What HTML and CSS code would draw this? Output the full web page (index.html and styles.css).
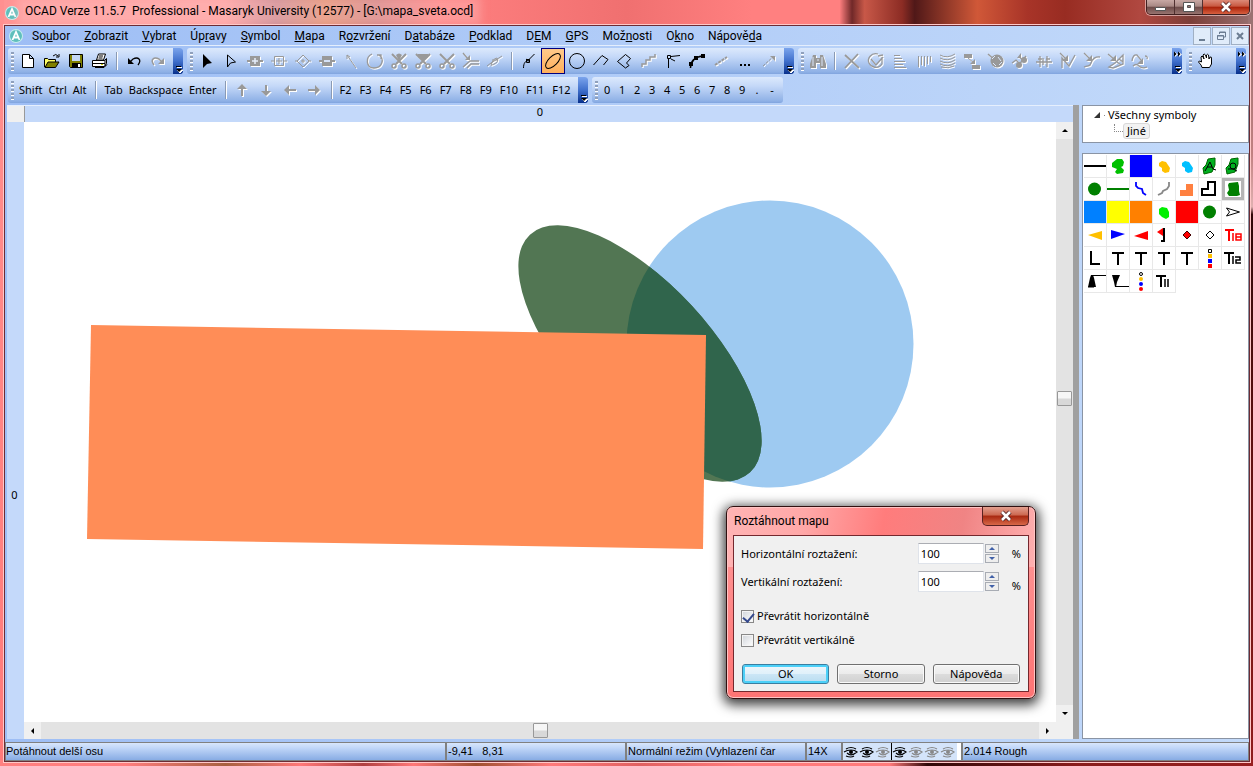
FILE: index.html
```
<!DOCTYPE html>
<html lang="cs">
<head>
<meta charset="utf-8">
<title>OCAD</title>
<link rel="stylesheet" href="styles.css">
</head>
<body>
<div class="window">
  <header class="titlebar">
    <svg class="logo" viewBox="0 0 14 14"><use href="#logo"/></svg>
    <h1 class="title">OCAD Verze 11.5.7&nbsp; Professional - Masaryk University (12577) - [G:\mapa_sveta.ocd]</h1>
    <div class="winbtns">
      <button class="wb" aria-label="Minimalizovat"><svg viewBox="0 0 14 12"><path d="M1.500 6.500h10v3h-10z" fill="#fff" stroke="#555"/></svg></button>
      <button class="wb" aria-label="Maximalizovat"><svg viewBox="0 0 14 12"><path d="M1.500 1.500h11v9h-11zM5.500 4.500v2h3v-2z" fill="#fff" fill-rule="evenodd" stroke="#555"/></svg></button>
      <button class="wb close" aria-label="Zavřít"><svg viewBox="0 0 14 12"><use href="#x"/></svg></button>
    </div>
  </header>
  <div class="frame">
    <nav class="menubar">
      <svg class="logo" viewBox="0 0 14 14"><use href="#logo"/></svg>
      <div class="menus">
      <a href="#">So<u>u</u>bor</a><a href="#"><u>Z</u>obrazit</a><a href="#"><u>V</u>ybrat</a><a href="#">Úp<u>r</u>avy</a><a href="#"><u>S</u>ymbol</a><a href="#"><u>M</u>apa</a><a href="#">R<u>o</u>zvržení</a><a href="#">D<u>a</u>tabáze</a><a href="#"><u>P</u>odklad</a><a href="#">D<u>E</u>M</a><a href="#"><u>G</u>PS</a><a href="#">Mož<u>n</u>osti</a><a href="#">O<u>k</u>no</a><a href="#">Nápově<u>d</u>a</a>
      </div>
      <div class="mdi">
        <button aria-label="Minimalizovat mapu"><svg viewBox="0 0 16 16"><path d="M5 11h6v2H5z" fill="#6b7d92"/></svg></button>
        <button aria-label="Obnovit mapu"><svg viewBox="0 0 16 16"><path d="M6.500 6V4h6v5h-2M4.500 7.500h6v4h-6zM4 8h7M6 4.500h7" fill="none" stroke="#6b7d92"/></svg></button>
        <button aria-label="Zavřít mapu"><svg viewBox="0 0 16 16"><path d="M5 5l6 6M11 5l-6 6" stroke="#6b7d92" stroke-width="2"/></svg></button>
      </div>
    </nav>

    <div class="bars">
      <div class="row">
        <div class="bar"><i class="grip"></i>
          <button class="tb" aria-label="Nový"><svg viewBox="0 0 20 20"><path d="M4.500 3.500h7l4 4v9h-11zM11.500 3.500v4h4" fill="#fff" stroke="#000"/></svg></button>
          <button class="tb" aria-label="Otevřít"><svg viewBox="0 0 20 20"><path d="M2.500 16V7.500h3l1 1h7V11" fill="#ffff66" stroke="#000"/><path d="M3 16.500l3-5.500h11l-3.500 5.500z" fill="#808000" stroke="#000"/><path d="M11 5q3-3 5 0M17 3v3h-3" fill="none" stroke="#000"/></svg></button>
          <button class="tb" aria-label="Uložit"><svg viewBox="0 0 20 20"><path d="M3.500 3.500h13v13h-12l-1-1z" fill="#808000" stroke="#000"/><path d="M6 4h8v6H6z" fill="#c3d6f5"/><path d="M6 12h9v4H6z" fill="#000"/><path d="M12 13h2v3h-2z" fill="#fff"/></svg></button>
          <button class="tb" aria-label="Tisk"><svg viewBox="0 0 20 20"><path d="M6.500 9l2-6h7l-2 6z" fill="#fff" stroke="#000"/><path d="M2.500 9.500h12l2-2v5l-2 3h-12z" fill="#fff" stroke="#000"/><path d="M3 12.500h12M5 16.500h9l3-3M9 5h4M8.500 7h4M15 9v6" fill="none" stroke="#000"/><path d="M11 13h2v1h-2z" fill="#cc0"/></svg></button>
          <i class="sep"></i>
          <button class="tb" aria-label="Zpět"><svg viewBox="0 0 20 20"><path d="M4 7v6h6z"/><path d="M6 11l3-3q4-2 6 0t-1 6" fill="none" stroke="#000" stroke-width="1.300"/></svg></button>
          <button class="tb off" aria-label="Znovu"><svg viewBox="0 0 20 20"><path d="M16 7v6h-6z"/><path class="l" d="M14 11l-3-3q-4-2-6 0t1 6" stroke-width="1.500"/></svg></button>
          <button class="more" aria-label="Další"><svg viewBox="0 0 10 26"><use href="#more"/></svg></button>
        </div>
        <div class="bar"><i class="grip"></i>
          <button class="tb" aria-label="Vybrat objekt"><svg viewBox="0 0 20 20"><path d="M6 3v14l4-4 5-1z"/></svg></button>
          <button class="tb" aria-label="Vybrat bod"><svg viewBox="0 0 20 20"><path d="M6.500 4v12l3-4 5-1z" fill="none" stroke="#000"/></svg></button>
          <button class="tb off" aria-label="Bod"><svg viewBox="0 0 20 20"><path d="M5 5h10v10H5zM2 9h3v2H2zM15 9h3v2h-3z"/><path d="M10 7v6M7 10h6" stroke="#e6eefb" stroke-width="1.500"/></svg></button>
          <button class="tb off" aria-label="Přidat bod"><svg viewBox="0 0 20 20"><path class="l" d="M2 10h3M15 10h3M10 7v6M7 10h6M5.500 5.500h9v9h-9z"/></svg></button>
          <button class="tb off" aria-label="Rohový bod"><svg viewBox="0 0 20 20"><path class="l" d="M10 4l6 6-6 6-6-6zM2 10h3M15 10h3M10 8v4M8 10h4"/></svg></button>
          <button class="tb off" aria-label="Odebrat bod"><svg viewBox="0 0 20 20"><path d="M5 5h10v10H5zM2 9h3v2H2zM15 9h3v2h-3z"/><path d="M7 9h6v2H7z" fill="#d5e2f8"/></svg></button>
          <button class="tb off" aria-label="Směr"><svg viewBox="0 0 20 20"><path class="l" d="M15 17L6 4M6 8V4l3 2"/></svg></button>
          <button class="tb off" aria-label="Otočit"><svg viewBox="0 0 20 20"><path class="l" d="M7 3C0 6 1 17 9 17s11-9 5-13M12 4h4v4" stroke-width="1.300"/></svg></button>
          <button class="tb off" aria-label="Vystřihnout"><svg viewBox="0 0 20 20"><use href="#cut"/><path d="M7 4q3-3 6 0l-3 6z"/></svg></button>
          <button class="tb off" aria-label="Vystřihnout linii"><svg viewBox="0 0 20 20"><use href="#cut"/><path d="M5 3h10v3l-5 4-5-4z"/></svg></button>
          <button class="tb off" aria-label="Střih"><svg viewBox="0 0 20 20"><use href="#cut"/></svg></button>
          <button class="tb off" aria-label="Spojit"><svg viewBox="0 0 20 20"><path d="M9 9V4L4 9z"/><path class="l" d="M2 2l5 6M2 16l7-6h9M6 17l4-4h8" stroke-width="1.300"/></svg></button>
          <button class="tb off" aria-label="Tvarovat"><svg viewBox="0 0 20 20"><path class="l" d="M2 15l4-3 11-7M6 15q1-7 6-8 3 4-5 7M7 9h6"/></svg></button>
          <i class="sep"></i>
          <button class="tb" aria-label="Křivka"><svg viewBox="0 0 20 20"><path d="M4.500 17c0-5 2-7 4-7l7-7M7 8l4 3M7.500 8.500h3v3h-3z" fill="none" stroke="#000"/></svg></button>
          <button class="tb active" aria-label="Elipsa"><svg viewBox="0 0 20 20"><ellipse cx="10" cy="10" rx="9.500" ry="4.500" transform="rotate(-45 10 10)" fill="none" stroke="#000"/></svg></button>
          <button class="tb" aria-label="Kružnice"><svg viewBox="0 0 20 20"><circle cx="10" cy="10" r="7.500" fill="none" stroke="#000"/></svg></button>
          <button class="tb" aria-label="Lomená čára"><svg viewBox="0 0 20 20"><path d="M2.500 14l8.500-9.500 6 4-4.500 5.500" fill="none" stroke="#000"/></svg></button>
          <button class="tb" aria-label="Pravoúhlá plocha"><svg viewBox="0 0 20 20"><path d="M2.500 10.500l8-7 5 4-4 4.500 2.500 2.500-3.500 2.500z" fill="none" stroke="#000"/></svg></button>
          <button class="tb off" aria-label="Schodiště"><svg viewBox="0 0 20 20"><path class="l" d="M3 16v-3h4V9h4V6h5V3" stroke-width="1.500"/></svg></button>
          <button class="tb" aria-label="Bod lomu"><svg viewBox="0 0 20 20"><path d="M5.500 17V8M8 5.500l9-1M4.500 4.500h3v3h-3zM8 8l4 2" fill="none" stroke="#000"/></svg></button>
          <button class="tb" aria-label="Volná křivka"><svg viewBox="0 0 20 20"><path d="M3.500 17c0-8 5-11 12-12" fill="none" stroke="#000" stroke-width="1.500"/><path d="M14 3h4v4h-4zM7 5h4v4H7zM2 11h4v4H2z"/></svg></button>
          <button class="tb off" aria-label="Tečky"><svg viewBox="0 0 20 20"><path class="l" d="M4 14L16 6" stroke-width="2" stroke-dasharray="3 1"/></svg></button>
          <button class="tb" aria-label="Více"><svg viewBox="0 0 20 20"><path d="M5 13h2v2H5zM9 13h2v2H9zM13 13h2v2h-2z"/></svg></button>
          <button class="tb off" aria-label="Sledovat"><svg viewBox="0 0 20 20"><path class="l" d="M4 15L15 5" stroke-dasharray="3 1"/><path d="M11 5h5v5z"/></svg></button>
          <button class="more" aria-label="Další"><svg viewBox="0 0 10 26"><use href="#more"/></svg></button>
        </div>
        <div class="bar grow"><i class="grip"></i>
          <button class="tb off" aria-label="Hledat"><svg viewBox="0 0 20 20"><path d="M5 4h3v3h4V4h3l3 9v4h-6v-5H8v5H2v-4z"/><path d="M5 6v9M14 6v9M9 9h2" stroke="#dce7fa"/></svg></button>
          <i class="sep"></i>
          <button class="tb off" aria-label="Smazat"><svg viewBox="0 0 20 20"><path class="l" d="M3 4l14 13M16 3L3 17" stroke-width="1.800"/></svg></button>
          <button class="tb off" aria-label="Otočit objekt"><svg viewBox="0 0 20 20"><path class="l" d="M12 3C5 1 1 8 3 12s9 7 13 1V6M5 8l5 6 7-8M17 4l-5 1" stroke-width="1.300"/></svg></button>
          <button class="tb off" aria-label="Zarovnat"><svg viewBox="0 0 20 20"><path class="l" d="M4 4.500h6M4 7.500h8M4 10.500h11M4 13.500h9M4 16.500h12"/></svg></button>
          <button class="tb off" aria-label="Rozmístit"><svg viewBox="0 0 20 20"><path class="l" d="M4.500 5v11M7.500 5v9M10.500 5v10M13.500 5v8M16.500 5v6"/></svg></button>
          <button class="tb off" aria-label="Vyplnit"><svg viewBox="0 0 20 20"><path class="l" d="M2 4q7 4 15-1M2 7q7 4 15-1M2 10q7 4 15-1M2 13q7 4 15-1M3 16q7 2 13-1"/></svg></button>
          <button class="tb off" aria-label="Kopírovat vlastnosti"><svg viewBox="0 0 20 20"><path d="M2 3h8v4H2zM10 14h8v4h-8zM13 8v5H8z"/><path class="l" d="M6 7l6 5"/></svg></button>
          <button class="tb off" aria-label="Vyříznout"><svg viewBox="0 0 20 20"><circle cx="11" cy="10" r="6.500"/><path class="l" d="M2 3l8 7" stroke-width="1.500"/><path d="M7 12l3 3M12 6l3 4M6 8l3-3M13 14l3-3" stroke="#dce7fa"/></svg></button>
          <button class="tb off" aria-label="Sloučit"><svg viewBox="0 0 20 20"><path class="l" d="M2 12l4-3 5 5M9 6l4 3M7 16l9-11" stroke-width="1.300"/><circle cx="14" cy="9" r="3"/><circle cx="9" cy="14" r="3"/><path d="M11 2v5H7z"/></svg></button>
          <button class="tb off" aria-label="Rozdělit"><svg viewBox="0 0 20 20"><path class="l" d="M2 11h16M6 5v11M9 7v7M13 5v11M4 8h4M12 8h4" stroke-width="1.300"/></svg></button>
          <button class="tb off" aria-label="Upravit lomenou"><svg viewBox="0 0 20 20"><path class="l" d="M4 17V7l7 8 6-11M2 2l7 7" stroke-width="1.300"/><path d="M10 4v6H4z"/></svg></button>
          <button class="tb off" aria-label="Upravit křivku"><svg viewBox="0 0 20 20"><path class="l" d="M2 16c5-2 6 0 7-4s5-7 9-6M2 2l7 7" stroke-width="1.300"/><path d="M10 4v6H4z"/></svg></button>
          <button class="tb off" aria-label="Upravit plochu"><svg viewBox="0 0 20 20"><path class="l" d="M2 3l7 6M3 16l4 1 10-4V4l-8 8zM11 11l4 3M13 8l4 3" stroke-width="1.300"/><path d="M10 4v6H4z"/></svg></button>
          <button class="tb off" aria-label="Zjednodušit"><svg viewBox="0 0 20 20"><path class="l" d="M2 10q1-7 5-6l4 5M3 15q3-3 6 0t8 1M15 5q3 0 2 3" stroke-width="1.300"/><path d="M13 7v6H7z"/></svg></button>
          <button class="more" aria-label="Další"><svg viewBox="0 0 10 26"><use href="#chev"/><use href="#more"/></svg></button>
        </div>
        <div class="bar hand"><i class="grip"></i>
          <button class="tb" aria-label="Posun"><svg viewBox="0 0 20 20"><path d="M6 16.500q0-2-3.500-5.500 0-2 3 0L5 6q1-2 2 0l1 2-1-4q1-2 2.500 0l1 3V4q1-1.500 2 0l.5 4 1-2q2-.5 1.500 2v5l-2 3.500z" fill="#fff" stroke="#000"/></svg></button>
          <button class="more" aria-label="Další"><svg viewBox="0 0 10 26"><use href="#chev"/><use href="#more"/></svg></button>
        </div>
      </div>
      <div class="row">
        <div class="bar keys"><i class="grip"></i>
          <button>Shift</button><button>Ctrl</button><button>Alt</button><i class="sep"></i>
          <button>Tab</button><button>Backspace</button><button>Enter</button><i class="sep tight"></i>
          <button class="tb off" aria-label="Nahoru"><svg viewBox="0 0 20 20"><path d="M10 4l5 5h-4v7H9V9H5z"/></svg></button>
          <button class="tb off" aria-label="Dolů"><svg viewBox="0 0 20 20"><path d="M10 16l5-5h-4V5H9v6H5z"/></svg></button>
          <button class="tb off" aria-label="Vlevo"><svg viewBox="0 0 20 20"><path d="M4 10l5-5v4h7v2H9v4z"/></svg></button>
          <button class="tb off" aria-label="Vpravo"><svg viewBox="0 0 20 20"><path d="M16 10l-5-5v4H4v2h7v4z"/></svg></button>
          <i class="sep tight"></i>
          <div class="fkeys"><button>F2</button><button>F3</button><button>F4</button><button>F5</button><button>F6</button><button>F7</button><button>F8</button><button>F9</button><button>F10</button><button>F11</button><button>F12</button></div>
          <button class="more" aria-label="Další"><svg viewBox="0 0 10 26"><use href="#more"/></svg></button>
        </div>
        <div class="bar digits"><i class="grip"></i>
          <button>0</button><button>1</button><button>2</button><button>3</button><button>4</button><button>5</button><button>6</button><button>7</button><button>8</button><button>9</button><button>.</button><button>-</button>
        </div>
      </div>
    </div>

    <main class="work">
      <section class="editor">
        <div class="corner"></div>
        <div class="ruler-x">0</div>
        <div class="ruler-y">0</div>
        <div class="map">
          <svg class="drawing" width="1032" height="600">
            <defs><clipPath id="disc"><circle cx="746" cy="222" r="143.500"/></clipPath></defs>
            <circle cx="746" cy="222" r="143.500" fill="#9ecaf1"/>
            <ellipse cx="616" cy="231.500" rx="162" ry="70.500" transform="rotate(47.200 616 231.500)" fill="#527653"/>
            <g clip-path="url(#disc)"><ellipse cx="616" cy="231.500" rx="162" ry="70.500" transform="rotate(47.200 616 231.500)" fill="#30654c"/></g>
            <path d="M67 203l615 10-3 214-616-10z" fill="#ff8d57"/>
          </svg>
          <form class="dialog">
            <div class="dlg-title"><h2>Roztáhnout mapu</h2><button type="button" class="dlg-close" aria-label="Zavřít"><svg viewBox="0 0 14 12"><use href="#x"/></svg></button></div>
            <div class="dlg-body">
              <div class="field"><label for="h">Horizontální roztažení:</label><input id="h" type="text" value="100"><span class="spin"><button type="button" aria-label="Zvýšit"><svg viewBox="0 0 6 3"><path d="M0 3l3-3 3 3z"/></svg></button><button type="button" aria-label="Snížit"><svg viewBox="0 0 6 3"><path d="M0 0l3 3 3-3z"/></svg></button></span><span class="pct">%</span></div>
              <div class="field"><label for="v">Vertikální roztažení:</label><input id="v" type="text" value="100"><span class="spin"><button type="button" aria-label="Zvýšit"><svg viewBox="0 0 6 3"><path d="M0 3l3-3 3 3z"/></svg></button><button type="button" aria-label="Snížit"><svg viewBox="0 0 6 3"><path d="M0 0l3 3 3-3z"/></svg></button></span><span class="pct low">%</span></div>
              <label class="check first"><input type="checkbox" checked>Převrátit horizontálně</label>
              <label class="check"><input type="checkbox">Převrátit vertikálně</label>
              <div class="actions"><button type="button" class="primary">OK</button><button type="button">Storno</button><button type="button">Nápověda</button></div>
            </div>
          </form>
        </div>
        <div class="scroll-y"><button aria-label="Nahoru"><svg viewBox="0 0 8 4"><path d="M0 4l4-4 4 4z"/></svg></button><i class="thumb"></i><button aria-label="Dolů"><svg viewBox="0 0 8 4"><path d="M0 0l4 4 4-4z"/></svg></button></div>
        <div class="scroll-x"><button aria-label="Vlevo"><svg viewBox="0 0 4 8"><path d="M4 0L0 4l4 4z"/></svg></button><i class="thumb"></i><button aria-label="Vpravo"><svg viewBox="0 0 4 8"><path d="M0 0l4 4-4 4z"/></svg></button></div>
        <div class="size"></div>
      </section>
      <div class="splitter"></div>
      <aside class="side">
        <div class="tree">
          <div class="node"><svg width="8" height="8" viewBox="0 0 8 8"><path d="M1 7l6-6v6z" fill="#333"/></svg><i class="dot"></i><span>Všechny symboly</span></div>
          <div class="node"><i class="branch"></i><span class="sel">Jiné</span></div>
        </div>
        <div class="symbols">
          <div class="grid">
            <svg viewBox="0 0 22 22"><path d="M0 11h22" stroke="#000" stroke-width="2"/></svg>
            <svg viewBox="0 0 22 22"><path d="M5 8l5-4h5l2 3-1 4-2 1 3 3-1 3-6 1-2-2 2-3-5-2z" fill="#00c000"/></svg>
            <svg viewBox="0 0 22 22"><path d="M0 0h22v22H0z" fill="#00f"/></svg>
            <svg viewBox="0 0 22 22"><path d="M6 8l3-2 4 1 2 3 2 3-1 4-4 1-3-2v-3l-3-2z" fill="#ffc000"/></svg>
            <svg viewBox="0 0 22 22"><path d="M6 8l3-2 4 1 2 3 2 3-1 4-4 1-3-2v-3l-3-2z" fill="#00c0ff"/></svg>
            <svg viewBox="0 0 22 22"><path d="M9 4l7-1v7l-3 7-8 2-1-6 3-3z" fill="#00b020" stroke="#060"/><path d="M6 16l5-9 3 7 3 1M8 12h5" fill="none" stroke="#000"/></svg>
            <svg viewBox="0 0 22 22"><path d="M9 4l7-1v6l-3 8-8 2-1-6 3-3z" fill="#00b020" stroke="#060"/><circle cx="11" cy="11" r="3" fill="none" stroke="#000"/><path d="M6 14h5l4 2" fill="none" stroke="#000"/></svg>
            <svg viewBox="0 0 22 22"><circle cx="10.500" cy="11" r="6.500" fill="#008000"/></svg>
            <svg viewBox="0 0 22 22"><path d="M0 11h22" stroke="#008000" stroke-width="2"/></svg>
            <svg viewBox="0 0 22 22"><path d="M6 4v4l2 2 4 1 1 4 3 2" fill="none" stroke="#00f" stroke-width="1.800"/></svg>
            <svg viewBox="0 0 22 22"><path d="M16 4v4l-2 3-4 2-1 2-4 2" fill="none" stroke="#888" stroke-width="1.800"/></svg>
            <svg viewBox="0 0 22 22"><path d="M10 6h7v12H4v-6h6z" fill="#ff8040"/></svg>
            <svg viewBox="0 0 22 22"><path d="M9 4h7v13H3v-6h6z" fill="#fff" stroke="#000" stroke-width="2"/></svg>
            <svg viewBox="0 0 22 22"><path d="M1.500 1.500h19v19h-19z" fill="#fff" stroke="#b5b5b5" stroke-width="3"/><path d="M7 5l9-1 1 4v5l1 4-3 1H7l-2-3 2-3-1-5z" fill="#008000"/></svg>
            <svg viewBox="0 0 22 22"><path d="M0 0h22v22H0z" fill="#0080ff"/></svg>
            <svg viewBox="0 0 22 22"><path d="M0 0h22v22H0z" fill="#ff0"/></svg>
            <svg viewBox="0 0 22 22"><path d="M0 0h22v22H0z" fill="#ff8000"/></svg>
            <svg viewBox="0 0 22 22"><path d="M6 8l3-2 5 1 2 4v5l-3 2-4-2-3-3z" fill="#00f000"/></svg>
            <svg viewBox="0 0 22 22"><path d="M0 0h22v22H0z" fill="red"/></svg>
            <svg viewBox="0 0 22 22"><circle cx="10.500" cy="11" r="6.500" fill="#008000"/></svg>
            <svg viewBox="0 0 22 22"><path d="M4.500 7l13 4-13 4 3-4z" fill="#fff" stroke="#000"/></svg>
            <svg viewBox="0 0 22 22"><path d="M4 11l14-4v9z" fill="#ffc000"/></svg>
            <svg viewBox="0 0 22 22"><path d="M18 10L4 6v9z" fill="#00f"/></svg>
            <svg viewBox="0 0 22 22"><path d="M4 12l14-5v9z" fill="red"/></svg>
            <svg viewBox="0 0 22 22"><path d="M4 8l6-4v8z" fill="red"/><path d="M11 4v13M8 17h4" stroke="#000" stroke-width="2"/></svg>
            <svg viewBox="0 0 22 22"><path d="M11 7l4 4-4 4-4-4z" fill="red" stroke="#400"/></svg>
            <svg viewBox="0 0 22 22"><path d="M11 7l4 4-4 4-4-4z" fill="#fff" stroke="#000"/></svg>
            <svg viewBox="0 0 22 22"><g fill="none" stroke="red" stroke-width="2"><path d="M3 6h9M7 6v11"/><path d="M11 9v8M14 10h5v6h-5zM14 13h5" stroke-width="1.500"/></g></svg>
            <svg viewBox="0 0 22 22"><path d="M7 4v13h9" fill="none" stroke="#000" stroke-width="2"/></svg>
            <svg viewBox="0 0 22 22"><use href="#tee"/></svg>
            <svg viewBox="0 0 22 22"><use href="#tee"/></svg>
            <svg viewBox="0 0 22 22"><use href="#tee"/></svg>
            <svg viewBox="0 0 22 22"><use href="#tee"/></svg>
            <svg viewBox="0 0 22 22"><path d="M9.500 2.500h3v3h-3z" fill="#fff" stroke="#000"/><path d="M9 7h4v4H9z" fill="#ffc000"/><path d="M9 12h4v4H9z" fill="#00f"/><path d="M9 17h4v4H9z" fill="red"/></svg>
            <svg viewBox="0 0 22 22"><g fill="none" stroke="#000" stroke-width="2"><path d="M2 6h10M7 6v11"/><path d="M11 9v8M13 10h5v3h-4v3h5" stroke-width="1.500"/></g></svg>
            <svg viewBox="0 0 22 22"><path d="M7 5h2l1 3 2 9H4l2-9z"/><path d="M8 5.500h14M4 17h6" stroke="#000"/></svg>
            <svg viewBox="0 0 22 22"><path d="M5 5h8l-3 7-1 5H8l-1-5z"/><path d="M8 16.500h14" stroke="#000"/></svg>
            <svg viewBox="0 0 22 22"><circle cx="11" cy="4" r="1.500" fill="#fff" stroke="#000"/><circle cx="11" cy="9" r="2" fill="#ffc000"/><circle cx="11" cy="14" r="2" fill="#00f"/><circle cx="11" cy="19" r="2" fill="red"/></svg>
            <svg viewBox="0 0 22 22"><g fill="none" stroke="#000" stroke-width="2"><path d="M3 6h10M8 6v11"/><path d="M12 9v8M15 9v8" stroke-width="1.500"/></g></svg>
          </div>
        </div>
      </aside>
    </main>

    <footer class="status">
      <span class="s hint">Potáhnout delší osu</span>
      <span class="s pos">-9,41&nbsp;&nbsp; 8,31</span>
      <span class="s mode">Normální režim (Vyhlazení čar</span>
      <span class="s zoom">14X</span>
      <span class="s eyes">
        <svg viewBox="0 0 16 14"><use href="#eye"/></svg><svg viewBox="0 0 16 14"><use href="#eye"/></svg><svg class="dim" viewBox="0 0 16 14"><use href="#eye"/></svg><i class="bar-v"></i><svg viewBox="0 0 16 14"><use href="#eye"/></svg><svg class="dim" viewBox="0 0 16 14"><use href="#eye"/></svg><svg class="dim" viewBox="0 0 16 14"><use href="#eye"/></svg><svg class="dim" viewBox="0 0 16 14"><use href="#eye"/></svg>
      </span>
      <span class="s sym">2.014 Rough</span>
    </footer>
  </div>
</div>
<svg class="defs" width="0" height="0">
  <symbol id="logo" viewBox="0 0 14 14"><circle cx="7" cy="7" r="7" fill="#c5eeee"/><circle cx="7" cy="7" r="6" fill="#5fbfbc"/><path d="M3.500 11L7 3l3.500 8M5 8.500h4" fill="none" stroke="#fff" stroke-width="1.800"/></symbol>
  <symbol id="x" viewBox="0 0 14 12"><path d="M3 2l8 8M11 2l-8 8" stroke="#5a2a2a" stroke-width="4.500"/><path d="M3 2l8 8M11 2l-8 8" stroke="#fff" stroke-width="2.500"/></symbol>
  <symbol id="more" viewBox="0 0 10 26"><path d="M4 19.500h5M4 22h6l-3 3z" fill="#fff" stroke="#fff"/><path d="M3 21h6l-3 3z"/><path d="M3 18.500h5" stroke="#000"/></symbol>
  <symbol id="chev" viewBox="0 0 10 26"><path d="M3 4l3 2.500L3 9zM7 4l3 2.500L7 9z" fill="#fff"/><path d="M2 3.500L4.500 6 2 8.500zM6 3.500L8.500 6 6 8.500z"/></symbol>
  <symbol id="cut" viewBox="0 0 20 20"><path d="M3 3l10 10M17 3L7 13" fill="none" stroke="#999" stroke-width="2"/><circle cx="5" cy="15" r="2" fill="none" stroke="#999" stroke-width="1.500"/><circle cx="15" cy="15" r="2" fill="none" stroke="#999" stroke-width="1.500"/></symbol>
  <symbol id="tee" viewBox="0 0 22 22"><path d="M5 6h12M11 6v12" fill="none" stroke="#000" stroke-width="2"/></symbol>
  <symbol id="eye" viewBox="0 0 16 14"><path d="M3 4q5-3 10 0M1 7q3-2 7-2t6 2q-6 5-10 1M3 11q5 2 8 0" fill="none" stroke="currentColor" stroke-width="1.200"/><circle cx="8" cy="7" r="2" fill="currentColor"/></symbol>
</svg>
</body>
</html>
```
FILE: styles.css
```
* { box-sizing: border-box; }
html, body { height: 100%; margin: 0; }
body { font: 11px/14px "Noto Sans", "Open Sans", sans-serif; color: #000; overflow: hidden; }
button { font: inherit; color: inherit; background: none; border: 0; padding: 0; margin: 0; display: flex; align-items: center; justify-content: center; }
h1, h2 { margin: 0; font-weight: normal; }
svg { display: block; }
.defs { position: absolute; }

.window {
  height: 100vh; display: flex; flex-direction: column; padding: 0 3px 4px 4px;
  background:
    linear-gradient(90deg, #ff8080 0, #ff7d7d 10%, #a86040 18%, #ff7878 24%, #b04040 29%, #ff7878 33%, #a05030 38%, #ff7a7a 44%, #e06060 51%, #ff7a7a 59%, #ff7a7a 71%, #300808 74%, #8a1c1c 86%, #982020 100%) bottom / 100% 6px no-repeat,
    linear-gradient(180deg, #ff9090 0, #ff7a7a 100%) left / 4px 100% no-repeat,
    linear-gradient(180deg, #967070 0, #c08080 20%, #e0b0b0 27%, #300808 28%, #601010 60%, #901c1c 100%) right / 5px 100% no-repeat,
    linear-gradient(90deg, #ff9494 0, #ffa0a0 18%, #c88890 22%, #e09070 26%, #d08080 30%, #ff8080 35%, #f07070 50%, #ff8080 60%, #ff8080 67%, #702828 68%, #c85848 69%, #8c2c24 72%, #501818 73%, #d05838 78%, #a83428 82%, #982c22 85%, #b04840 91%, #7c3e38 95%, #987070 100%);
}
.titlebar { height: 25px; flex: none; display: flex; align-items: center; padding-left: 1px; }
.logo { width: 14px; height: 14px; flex: none; }
.title { font: 12px/16px Roboto, "Noto Sans", sans-serif; margin: -3px 0 0 4px; padding: 0 2px; white-space: nowrap; background: rgba(255, 200, 200, .35); box-shadow: 0 0 8px 6px rgba(255, 200, 200, .35); }
.winbtns { margin-left: auto; align-self: flex-start; display: flex; border: 1px solid #402020; border-top: 0; border-radius: 0 0 5px 5px; overflow: hidden; box-shadow: 0 0 0 1px rgba(255, 220, 220, .6); }
.wb { width: 28px; height: 14px; background: linear-gradient(#c8a8a4 0, #a88884 45%, #6c4a48 50%, #987470 100%); border-right: 1px solid #503030; }
.wb svg { width: 14px; height: 12px; }
.wb.close { width: 46px; border: 0; background: linear-gradient(#dc8a78 0, #c85840 45%, #a82008 50%, #d86040 100%); }

.frame { flex: 1; min-height: 0; display: flex; flex-direction: column; border: 1px solid #6c2c34; outline: 1px solid #ffc8c8; background: linear-gradient(90deg, #9ebef5, #c3dafa); }
.menubar { display: flex; align-items: center; height: 20px; padding-left: 4px; border-bottom: 1px solid #e4eefd; flex: none; }
.menus { display: flex; gap: 14px; margin-left: 9px; font: 12px/18px Roboto, "Noto Sans", sans-serif; }
.menus a { color: #000; text-decoration: none; }
.mdi { display: flex; gap: 1px; margin-left: auto; }
.mdi button { width: 18px; height: 18px; border: 1px solid #a0b0c4; background: #e0ecfa; }
.mdi svg { width: 16px; height: 16px; }

.bars { padding: 2px 3px 2px; display: flex; flex-direction: column; gap: 3px; flex: none; }
.row { display: flex; gap: 4px; height: 26px; }
.bar { display: flex; align-items: stretch; border-radius: 3px; overflow: hidden; background: linear-gradient(#dce9fc 0, #c4d8f8 35%, #8fb1e6 92%, #80a4de 100%); }
.grow { flex: 1; }
.hand { width: 60px; }
.grip { width: 3px; margin: 4px 2px 3px 3px; background: repeating-linear-gradient(#8fa0bc 0 2px, #fff 2px 3px, transparent 3px 4px); flex: none; }
.sep { width: 2px; margin: 4px; background: linear-gradient(90deg, #8a9ab4 50%, #fff 50%); flex: none; }
.tb { width: 24px; flex: none; }
.tb svg { width: 20px; height: 20px; }
.tb.active { background: linear-gradient(#ffc98a, #ffb05c); border: 1px solid #000080; }
.off svg { fill: #999; filter: drop-shadow(1px 1px 0 #fff); }
.off .l { fill: none; stroke: #999; }
.more { width: 10px; margin-left: auto; background: linear-gradient(#7ba4ec 0, #4070cc 50%, #08308c 100%); flex: none; }
.more svg { width: 10px; height: 26px; }
.row .tb:nth-last-child(2) { margin-right: 3px; }
.keys > button:not(.tb):not(.more) { padding: 0 3px; }
.keys .sep { margin: 4px 5px; }
.keys .sep.tight { margin: 4px 3px 4px 5px; }
.fkeys { display: flex; margin-right: 3px; }
.fkeys button { padding: 0 4px; }
.digits { padding-right: 3px; }
.digits button { width: 15px; }

.work { flex: 1; min-height: 0; display: flex; padding: 0 0 3px 2px; }
.editor { flex: 1; min-width: 0; display: grid; grid-template: 16px 1fr 17px / 17px 1fr 17px; border-top: 1px solid #e6effd; }
.corner { background: #f0f0f0; }
.ruler-x { grid-column: 2 / 4; background: #c4d9fa; text-align: center; line-height: 12px; padding-right: 18px; border-left: 1px solid #999; }
.ruler-y { grid-row: 2 / 4; background: #c4d9fa; display: flex; flex-direction: column; justify-content: center; align-items: center; padding: 128px 2px 0 0; }
.map { grid-column: 2; grid-row: 2; position: relative; background: #fff; overflow: hidden; min-height: 0; }
.drawing { position: absolute; left: 0; top: 0; }
.scroll-y { grid-column: 3; grid-row: 2; background: #e3e3e3; display: flex; flex-direction: column; justify-content: space-between; align-items: center; }
.scroll-y button { width: 17px; height: 17px; background: #f0f0f0; }
.scroll-y svg { width: 6px; height: 3px; }
.thumb { width: 15px; height: 15px; border: 1px solid #989898; border-radius: 1px; background: linear-gradient(#f6f6f6 45%, #d8d8d8 55%); }
.scroll-y .thumb { margin-bottom: 48px; }
.scroll-x { grid-column: 2; grid-row: 3; background: #e3e3e3; display: flex; justify-content: space-between; align-items: center; }
.scroll-x button { width: 17px; height: 17px; background: #f0f0f0; }
.scroll-x svg { width: 3px; height: 6px; }
.size { background: #f0f0f0; }
.splitter { width: 6px; background: #a0a0a0; flex: none; }
.side { width: 170px; padding-left: 3px; display: flex; flex-direction: column; gap: 10px; flex: none; }
.tree { height: 38px; border: 1px solid #8a94a4; background: #fff; padding: 1px 8px; flex: none; }
.node { display: flex; align-items: center; height: 16px; }
.node svg { margin-left: 2px; }
.dot { width: 1px; height: 1px; background: #888; margin: 0 3px; }
.branch { width: 9px; height: 8px; border: 1px dotted #888; border-width: 0 0 1px 1px; margin: 0 0 6px 23px; }
.sel { border: 1px solid #d8d8d8; border-radius: 3px; background: #f2f2f2; padding: 0 3px; line-height: 14px; }
.symbols { flex: 1; border: 1px solid #8a94a4; background: #fff; padding: 1px; }
.grid { display: grid; grid-template-columns: repeat(7, 23px); }
.grid svg { width: 23px; height: 23px; border: 1px solid #e8e8e8; border-width: 0 1px 1px 0; }

.status { height: 19px; display: flex; border: 1px solid #808080; background: linear-gradient(#d8e6fc, #c0d6f8 30%, #88ace4); font: 11px/17px "Liberation Sans", Arial, sans-serif; flex: none; }
.s { border-left: 2px solid #808080; padding-left: 1px; white-space: nowrap; overflow: hidden; }
.hint { width: 439px; border: 0; padding: 0; }
.pos, .mode { width: 180px; }
.zoom { width: 36px; }
.sym { flex: 1; }
.eyes { width: 120px; display: flex; align-items: center; padding: 0; background: linear-gradient(90deg, #d4e4fa 97%, #fff 97%); }
.eyes svg { width: 16px; height: 14px; }
.dim { color: #888; }
.bar-v { width: 1px; height: 17px; background: #000; }

.dialog { position: absolute; left: 702px; top: 384px; width: 310px; padding: 0 6px 6px; border: 1px solid #301010; border-radius: 7px; background: linear-gradient(100deg, #ffb4b4 0, #ffa8a8 25%, #ff7c7c 50%, #f08484 75%, #ffb0b0 100%) top / 100% 60px no-repeat, linear-gradient(#ff9c9c, #ff7474); box-shadow: inset 0 0 0 1px #ffc4c4, 0 3px 12px 3px rgba(0, 0, 0, .75); }
.dlg-title { height: 28px; display: flex; align-items: center; padding-left: 1px; }
.dlg-title h2 { font: 12px/16px Roboto, "Noto Sans", sans-serif; }
.dlg-close { width: 47px; height: 19px; margin-left: auto; align-self: flex-start; border: 1px solid #5a2020; border-top: 0; border-radius: 0 0 5px 5px; background: linear-gradient(#e4a090 0, #cc6850 45%, #a82810 50%, #d86848 100%); }
.dlg-close svg { width: 14px; height: 12px; }
.dlg-body { border: 1px solid #74282e; background: #f0f0f0; padding: 7px; }
.field { display: flex; align-items: center; height: 21px; margin-bottom: 7px; }
.field label { width: 177px; }
.field input { width: 66px; height: 21px; font: inherit; border: 1px solid #dfe3ea; border-top-color: #abadb3; background: #fff; padding: 0 2px; }
.spin { width: 14px; display: flex; flex-direction: column; gap: 1px; margin-left: 1px; }
.spin button { height: 9px; border: 1px solid #a8acb4; background: #eee; }
.spin svg { width: 6px; height: 3px; fill: #4060a8; }
.pct { margin-left: 13px; }
.low { padding-top: 8px; }
.check { display: flex; align-items: center; gap: 3px; height: 24px; }
.check.first { margin-top: 12px; }
.check input { appearance: none; width: 13px; height: 13px; margin: 0; border: 1px solid #888; background: linear-gradient(135deg, #d0d4da, #fff); box-shadow: inset 0 0 0 1px #f4f4f4; }
.check input:checked::after { content: ""; display: block; width: 5px; height: 9px; margin: 0 0 0 3px; border: solid #34488c; border-width: 0 2px 2px 0; transform: rotate(40deg); }
.actions { display: flex; gap: 8px; padding: 12px 1px 0; }
.actions button { flex: 1; height: 20px; border: 1px solid #707070; border-radius: 3px; background: linear-gradient(#f4f4f4 0, #ebebeb 50%, #dcdcdc 50%, #d0d0d0 100%); box-shadow: inset 0 0 0 1px #fafafa; }
.actions .primary { border-color: #3a7ea0; background: linear-gradient(#eef6fb 0, #e0f0fa 50%, #cce6f6 50%, #b8dcf0 100%); box-shadow: inset 0 0 0 2px #4cd0f8; }
```
